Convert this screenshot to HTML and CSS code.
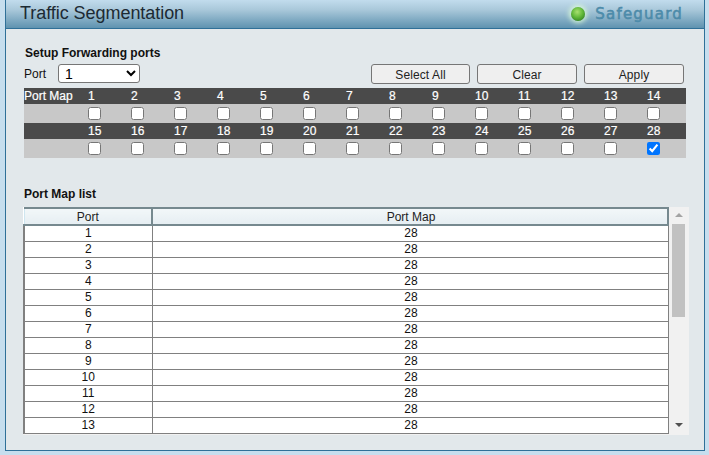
FILE: index.html
```html
<!DOCTYPE html>
<html lang="en">
<head>
<meta charset="utf-8">
<title>Traffic Segmentation</title>
<link rel="stylesheet" href="styles.css">
</head>
<body>
<main class="panel">
  <header class="header">
    <h1 class="title">Traffic Segmentation</h1>
    <div class="safeguard"><span class="led"></span><span class="safeguard-text">Safeguard</span></div>
  </header>
  <section class="setup">
    <h2 class="section-title">Setup Forwarding ports</h2>
    <div class="controls">
      <label class="port-label" for="port">Port</label>
      <select class="port-select" id="port"><option>1</option></select>
      <div class="buttons">
        <button class="btn btn-first" type="button">Select All</button>
        <button class="btn" type="button">Clear</button>
        <button class="btn" type="button">Apply</button>
      </div>
    </div>
    <div class="map">
      <div class="map-head"><span class="map-name">Port Map</span><span>1</span><span>2</span><span>3</span><span>4</span><span>5</span><span>6</span><span>7</span><span>8</span><span>9</span><span>10</span><span>11</span><span>12</span><span>13</span><span>14</span></div>
      <div class="map-row"><span></span><input type="checkbox"><input type="checkbox"><input type="checkbox"><input type="checkbox"><input type="checkbox"><input type="checkbox"><input type="checkbox"><input type="checkbox"><input type="checkbox"><input type="checkbox"><input type="checkbox"><input type="checkbox"><input type="checkbox"><input type="checkbox"></div>
      <div class="map-head"><span></span><span>15</span><span>16</span><span>17</span><span>18</span><span>19</span><span>20</span><span>21</span><span>22</span><span>23</span><span>24</span><span>25</span><span>26</span><span>27</span><span>28</span></div>
      <div class="map-row"><span></span><input type="checkbox"><input type="checkbox"><input type="checkbox"><input type="checkbox"><input type="checkbox"><input type="checkbox"><input type="checkbox"><input type="checkbox"><input type="checkbox"><input type="checkbox"><input type="checkbox"><input type="checkbox"><input type="checkbox"><input type="checkbox" checked></div>
    </div>
  </section>
  <section class="list">
    <h2 class="section-title list-title">Port Map list</h2>
    <div class="list-frame">
      <table class="list-table">
        <thead><tr><th class="col-port">Port</th><th class="col-map">Port Map</th></tr></thead>
        <tbody>
          <tr><td>1</td><td class="col-map">28</td></tr>
          <tr><td>2</td><td class="col-map">28</td></tr>
          <tr><td>3</td><td class="col-map">28</td></tr>
          <tr><td>4</td><td class="col-map">28</td></tr>
          <tr><td>5</td><td class="col-map">28</td></tr>
          <tr><td>6</td><td class="col-map">28</td></tr>
          <tr><td>7</td><td class="col-map">28</td></tr>
          <tr><td>8</td><td class="col-map">28</td></tr>
          <tr><td>9</td><td class="col-map">28</td></tr>
          <tr><td>10</td><td class="col-map">28</td></tr>
          <tr><td>11</td><td class="col-map">28</td></tr>
          <tr><td>12</td><td class="col-map">28</td></tr>
          <tr><td>13</td><td class="col-map">28</td></tr>
        </tbody>
      </table>
      <div class="scrollbar">
        <span class="arrow arrow-up"></span>
        <span class="track"><span class="thumb"></span></span>
        <span class="arrow arrow-down"></span>
      </div>
    </div>
  </section>
</main>
</body>
</html>
```
FILE: styles.css
```css
* { box-sizing: border-box; }
html, body { margin: 0; height: 100%; }
body {
  background: #c6deee;
  font-family: "Liberation Sans", Arial, sans-serif;
  color: #111;
  padding: 0 4px 4px 5px;
  overflow: hidden;
}
.panel {
  width: 700px;
  height: 451px;
  background: #e2e8eb;
  border: 1px solid #2f7098;
  border-top: 0;
  display: flex;
  flex-direction: column;
}
.header {
  height: 29px;
  flex: none;
  display: flex;
  align-items: center;
  justify-content: space-between;
  padding: 0 21px 1px 14px;
  background: linear-gradient(#c2dced 0, #a9c8da 35%, #7ba7c0 75%, #5f93b0 100%);
  border-bottom: 1px solid #2f7098;
}
.title {
  margin: 0;
  font-size: 18px;
  font-weight: 400;
  letter-spacing: -.05px;
  color: #1c2a33;
}
.safeguard { display: flex; align-items: center; gap: 10px; margin-top: 1px; }
.led {
  width: 14px;
  height: 14px;
  border-radius: 50%;
  background: radial-gradient(circle at 45% 35%, #a8e070 0, #62b93a 45%, #1f6d18 100%);
  box-shadow: 0 0 5px 2px rgba(225, 255, 215, .85);
}
.safeguard-text {
  font-family: "DejaVu Sans", sans-serif;
  font-size: 15px;
  font-weight: 400;
  letter-spacing: 1.2px;
  color: #4d8fae;
  -webkit-text-stroke: .5px #4a86a5;
}
.setup { padding: 17px 0 0 18px; }
.section-title {
  margin: 0 0 0 1px;
  font-size: 12px;
  line-height: 14px;
  font-weight: 700;
  color: #111;
}
.controls {
  display: flex;
  align-items: flex-start;
  margin-top: 4px;
  height: 24px;
}
.port-label { font-size: 12px; line-height: 20px; width: 34px; }
.port-select {
  width: 82px;
  height: 19px;
  padding: 0 0 0 2px;
  font: 14px "Liberation Sans", Arial, sans-serif;
  background: #fff;
  border: 1px solid #767676;
  border-radius: 3px;
}
.buttons { display: flex; gap: 7px; margin-left: 231px; }
.btn {
  width: 100px;
  height: 20px;
  padding: 1px 0 0;
  font: 12px "Liberation Sans", Arial, sans-serif;
  letter-spacing: .1px;
  color: #222;
  background: #efefef;
  border: 1px solid #767676;
  border-radius: 3px;
}
.btn-first { width: 99px; }
.map { width: 662px; }
.map-head, .map-row {
  display: grid;
  grid-template-columns: 49px repeat(14, 43px) 11px;
  align-items: center;
  justify-items: center;
}
.map-head {
  height: 16px;
  background: #4a4a4a;
  color: #fff;
  font-size: 12px;
  font-weight: 400;
  -webkit-text-stroke: .2px #fff;
  justify-items: start;
}
.map-head span { padding-left: 15px; }
.map-head .map-name { padding-left: 0; white-space: nowrap; }
.map-row { height: 19px; background: #c8c8c8; }
.map-row input { width: 13px; height: 13px; margin: 0; }
.list { padding: 29px 0 0 17px; }
.list-title { margin-left: 1px; }
.list-frame {
  display: flex;
  margin-top: 6px;
  width: 666px;
  height: 228px;
  background: #f1f1f1;
}
.list-table {
  width: 646px;
  height: 226px;
  table-layout: fixed;
  border-collapse: collapse;
  background: #fff;
  font-size: 12px;
  align-self: flex-start;
  border-top: 2px solid #76898f;
}
.list-table th, .list-table td { padding: 0; text-align: center; border: 1px solid #808080; line-height: 14px; height: 16px; }
.list-table th {
  height: 17px;
  font-weight: 400;
  color: #222;
  background: linear-gradient(#f2f7f9, #e6eef2);
  border: 0;
  border-bottom: 2px solid #76898f;
  border-right: 2px solid #76898f;
  border-left: 2px solid #cfe6f0;
}
.list-table th:first-child { border-left: 1px solid #cfe6f0; }
.list-table td:first-child { border-left: 2px solid #808080; }
.list-table .col-map { padding-left: 2px; }
.col-port { width: 128px; }
.scrollbar {
  flex: none;
  width: 20px;
  display: flex;
  flex-direction: column;
  align-items: center;
  padding: 0 1px 0 0;
}
.arrow { flex: none; width: 0; height: 0; border-left: 4px solid transparent; border-right: 4px solid transparent; }
.arrow-up { margin-top: 6px; border-bottom: 4px solid #a3a3a3; }
.arrow-down { margin-bottom: 8px; border-top: 4px solid #505050; }
.track { flex: 1; width: 13px; margin: 7px 0; }
.thumb { display: block; width: 13px; height: 93px; background: #c1c1c1; }
```
